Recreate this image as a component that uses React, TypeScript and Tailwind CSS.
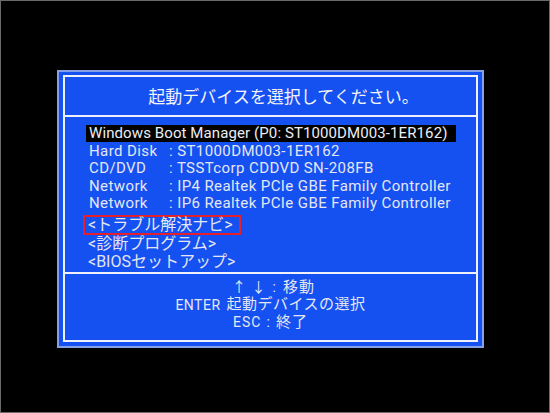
const latin = "font-['Roboto','Noto_Sans_CJK_JP',sans-serif]";

function DeviceRow({
  label,
  value,
}: {
  label: string;
  value: string;
}) {
  return (
    <div className="flex h-[17.5px] items-center pl-[24px] text-[15px] leading-none tracking-[0.4px] text-[#e4e7f2]">
      <span className="inline-block w-[80px] shrink-0">{label}</span>
      <span className="whitespace-pre">: {value}</span>
    </div>
  );
}

function MenuRow({ children }: { children: React.ReactNode }) {
  return (
    <div className="flex h-[18px] items-center pl-[23px] text-[16px] leading-none text-[#e4e7f2]">
      {children}
    </div>
  );
}

export default function App() {
  return (
    <div
      className={`flex h-[413px] w-[550px] items-start border border-[#6a6a6a] bg-black pl-[56px] pt-[69px] ${latin}`}
    >
      <div className="h-[278px] w-[427px] border-2 border-[#86a0e8] bg-[#1550f0] px-[4px] pb-[4px] pt-[3px]">
        <div className="flex h-full flex-col border-2 border-[#eef1fa]">
          {/* title */}
          <div className="flex h-[40px] shrink-0 items-center justify-center border-b-2 border-[#eef1fa] pl-[26px] pt-[3px]">
            <span className="text-[17px] leading-none text-[#f2f3f8]">
              起動デバイスを選択してください。
            </span>
          </div>

          {/* device list */}
          <div className="flex h-[157px] shrink-0 flex-col border-b-2 border-[#eef1fa] pt-[8px]">
            <div className="flex h-[17.5px] items-center pl-[21px] text-[15px] leading-none tracking-[0.1px]">
              <span className="flex h-[17px] items-center whitespace-nowrap bg-black pl-[3px] pr-[8px] text-[#eceef4]">
                Windows Boot Manager (P0: ST1000DM003-1ER162)
              </span>
            </div>
            <DeviceRow label="Hard Disk" value="ST1000DM003-1ER162" />
            <DeviceRow label="CD/DVD" value="TSSTcorp CDDVD SN-208FB" />
            <DeviceRow
              label="Network"
              value="IP4 Realtek PCIe GBE Family Controller"
            />
            <DeviceRow
              label="Network"
              value="IP6 Realtek PCIe GBE Family Controller"
            />
            <div className="mt-[2.5px] flex h-[20px] items-center pl-[18px]">
              <span className="flex h-[20px] items-center border-2 border-[#e3202c] pl-[3px] pr-[6px] text-[16px] leading-none text-[#e4e7f2]">
                &lt;トラブル解決ナビ&gt;
              </span>
            </div>
            <MenuRow>&lt;診断プログラム&gt;</MenuRow>
            <MenuRow>&lt;BIOSセットアップ&gt;</MenuRow>
          </div>

          {/* key help */}
          <div className="flex flex-1 flex-col items-center pt-[4.5px] text-[15px] leading-none text-[#e4e7f2]">
            <div className="flex h-[17.5px] items-center pl-[6px] tracking-[1px]">
              <span className="text-[14px]">↑ ↓</span>
              <span className="px-[6px] text-[14px]">:</span>
              <span>移動</span>
            </div>
            <div className="flex h-[17.5px] items-center tracking-[0.5px]">
              <span className="text-[14px]">ENTER</span>
              <span className="pl-[6px]">起動デバイスの選択</span>
            </div>
            <div className="flex h-[17.5px] items-center tracking-[1px]">
              <span className="text-[14px]">ESC</span>
              <span className="px-[5px] text-[14px]">:</span>
              <span>終了</span>
            </div>
          </div>
        </div>
      </div>
    </div>
  );
}
